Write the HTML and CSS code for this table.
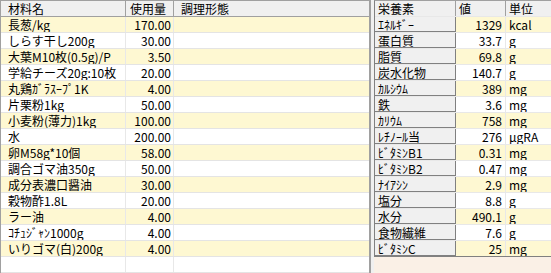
FILE: index.html
```html
<!DOCTYPE html>
<html lang="ja">
<head>
<meta charset="utf-8">
<link rel="stylesheet" href="styles.css">
</head>
<body>
<div class="app">
  <div class="grid left">
    <div class="row head"><div class="c">材料名</div><div class="c">使用量</div><div class="c">調理形態</div></div>
    <div class="row y"><div class="c">長葱/kg</div><div class="c num">170.00</div><div class="c"></div></div>
    <div class="row"><div class="c">しらす干し200g</div><div class="c num">30.00</div><div class="c"></div></div>
    <div class="row y"><div class="c">大葉M10枚(0.5g)/P</div><div class="c num">3.50</div><div class="c"></div></div>
    <div class="row"><div class="c">学給チーズ20g:10枚</div><div class="c num">20.00</div><div class="c"></div></div>
    <div class="row y"><div class="c">丸鶏ｶﾞﾗｽｰﾌﾟ1K</div><div class="c num">4.00</div><div class="c"></div></div>
    <div class="row"><div class="c">片栗粉1kg</div><div class="c num">50.00</div><div class="c"></div></div>
    <div class="row y"><div class="c">小麦粉(薄力)1kg</div><div class="c num">100.00</div><div class="c"></div></div>
    <div class="row"><div class="c">水</div><div class="c num">200.00</div><div class="c"></div></div>
    <div class="row y"><div class="c">卵M58g*10個</div><div class="c num">58.00</div><div class="c"></div></div>
    <div class="row"><div class="c">調合ゴマ油350g</div><div class="c num">50.00</div><div class="c"></div></div>
    <div class="row y"><div class="c">成分表濃口醤油</div><div class="c num">30.00</div><div class="c"></div></div>
    <div class="row"><div class="c">穀物酢1.8L</div><div class="c num">20.00</div><div class="c"></div></div>
    <div class="row y"><div class="c">ラー油</div><div class="c num">4.00</div><div class="c"></div></div>
    <div class="row"><div class="c">ｺﾁｭｼﾞｬﾝ1000g</div><div class="c num">4.00</div><div class="c"></div></div>
    <div class="row y"><div class="c">いりゴマ(白)200g</div><div class="c num">4.00</div><div class="c"></div></div>
    <div class="row"><div class="c"></div><div class="c num"></div><div class="c"></div></div>
  </div>
  <div class="splitter"></div>
  <div class="panel">
    <div class="grid right">
      <div class="row head"><div class="c">栄養素</div><div class="c">値</div><div class="c">単位</div></div>
      <div class="row y"><div class="c key">ｴﾈﾙｷﾞｰ</div><div class="c num">1329</div><div class="c">kcal</div></div>
      <div class="row"><div class="c key">蛋白質</div><div class="c num">33.7</div><div class="c">g</div></div>
      <div class="row y"><div class="c key">脂質</div><div class="c num">69.8</div><div class="c">g</div></div>
      <div class="row"><div class="c key">炭水化物</div><div class="c num">140.7</div><div class="c">g</div></div>
      <div class="row y"><div class="c key">ｶﾙｼｳﾑ</div><div class="c num">389</div><div class="c">mg</div></div>
      <div class="row"><div class="c key">鉄</div><div class="c num">3.6</div><div class="c">mg</div></div>
      <div class="row y"><div class="c key">ｶﾘｳﾑ</div><div class="c num">758</div><div class="c">mg</div></div>
      <div class="row"><div class="c key">ﾚﾁﾉｰﾙ当</div><div class="c num">276</div><div class="c">μgRA</div></div>
      <div class="row y"><div class="c key">ﾋﾞﾀﾐﾝB1</div><div class="c num">0.31</div><div class="c">mg</div></div>
      <div class="row"><div class="c key">ﾋﾞﾀﾐﾝB2</div><div class="c num">0.47</div><div class="c">mg</div></div>
      <div class="row y"><div class="c key">ﾅｲｱｼﾝ</div><div class="c num">2.9</div><div class="c">mg</div></div>
      <div class="row"><div class="c key">塩分</div><div class="c num">8.8</div><div class="c">g</div></div>
      <div class="row y"><div class="c key">水分</div><div class="c num">490.1</div><div class="c">g</div></div>
      <div class="row"><div class="c key">食物繊維</div><div class="c num">7.6</div><div class="c">g</div></div>
      <div class="row y"><div class="c key">ﾋﾞﾀﾐﾝC</div><div class="c num">25</div><div class="c">mg</div></div>
    </div>
  </div>
</div>
</body>
</html>
```
FILE: styles.css
```css
html, body {
  margin: 0;
  padding: 0;
  background: #f0f0f0;
}
body {
  font-family: "Noto Sans CJK JP", "Noto Sans", sans-serif;
  font-size: 12px;
  color: #000;
}
.app {
  display: flex;
  height: 273px;
  width: 551px;
  overflow: hidden;
}
.grid {
  display: flex;
  flex-direction: column;
}
.left {
  width: 368px;
  flex: none;
  background: #fff;
  border-top: 1px solid #a0a0a0;
  border-left: 1px solid #a0a0a0;
  border-right: 2px solid #a0a0a0;
}
.splitter {
  width: 3px;
  flex: none;
  background: #f0f0f0;
}
.panel {
  flex: 1;
  background: #faf0e6;
  display: flex;
  flex-direction: column;
  align-items: stretch;
}
.right {
  border-top: 1px solid #a0a0a0;
  border-left: 1px solid #808080;
  background: #fff;
}
.row {
  display: grid;
  height: 16px;
  box-sizing: border-box;
  border-bottom: 1px solid #e4e4e4;
  line-height: 15px;
}
.left .row {
  grid-template-columns: 125px 48px 1fr;
}
.right .row {
  grid-template-columns: 81px 50px 1fr;
}
.row.y {
  background: #fef8d2;
}
.c {
  white-space: nowrap;
  overflow: hidden;
  border-right: 1px solid #e8e8e8;
  padding: 0 0 0 7px;
}
.c:last-child {
  border-right: none;
}
.right .c {
  padding-left: 3px;
}
.c.num {
  text-align: right;
  padding: 0 2px 0 0;
}
.right .c.num {
  padding-right: 3px;
}
.row.head {
  background: #f0f0f0;
  border-bottom: 1px solid #a0a0a0;
}
.row.head .c {
  border-right: 1px solid #a0a0a0;
}
.row.head .c:last-child {
  border-right: none;
}
.left .row.head .c:nth-child(2) {
  padding-left: 4px;
}
.right .row.head .c:nth-child(2),
.right .row.head .c:nth-child(3) {
  padding-left: 3px;
}
.right .row {
  border-bottom-color: #e8e8e8;
}
.right .row:last-child {
  border-bottom: 1px solid #808080;
}
.c.key {
  background: #f0f0f0;
  border-right: 1px solid #808080;
  box-shadow: inset 0 -1px 0 #808080;
}
.right .c:nth-child(3) {
  padding-left: 3px;
}
```
